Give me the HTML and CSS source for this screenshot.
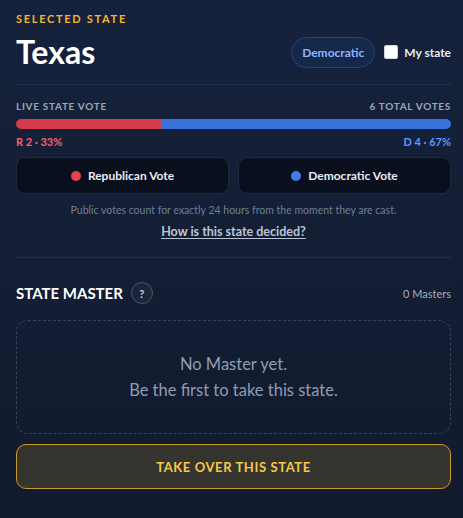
FILE: index.html
```html
<!DOCTYPE html>
<html lang="en">
<head>
  <meta charset="UTF-8">
  <meta name="viewport" content="width=device-width, initial-scale=1.0">
  <title>State Panel</title>
  <link rel="stylesheet" href="styles.css">
</head>
<body>
  <div class="panel">
    <div class="eyebrow">Selected State</div>
    <div class="state-head">
      <h1>Texas</h1>
      <div class="state-actions">
        <span class="party-pill">Democratic</span>
        <label class="my-state"><span class="box"></span> My state</label>
      </div>
    </div>

    <div class="vote-head">
      <span>Live State Vote</span>
      <span>6 Total Votes</span>
    </div>
    <div class="bar">
      <div class="bar-rep" style="width: 33.3%"></div>
      <div class="bar-dem"></div>
    </div>
    <div class="vote-counts">
      <span class="rep">R 2 · 33%</span>
      <span class="dem">D 4 · 67%</span>
    </div>

    <div class="vote-buttons">
      <button class="vote-btn"><span class="dot red"></span>Republican Vote</button>
      <button class="vote-btn"><span class="dot blue"></span>Democratic Vote</button>
    </div>
    <p class="note">Public votes count for exactly 24 hours from the moment they are cast.</p>
    <a class="how" href="#">How is this state decided?</a>

    <div class="master-head">
      <div class="master-title">State Master <span class="help">?</span></div>
      <span class="master-count">0 Masters</span>
    </div>
    <div class="empty-master">
      No Master yet.<br>
      Be the first to take this state.
    </div>
    <button class="take-over">Take Over This State</button>
  </div>
</body>
</html>
```

FILE: styles.css
```css
html, body {
  height: 100%;
}

body {
  margin: 0;
  font-family: Lato, "Open Sans", sans-serif;
  background: linear-gradient(180deg, #16223c 0%, #131d33 60%, #111a2d 100%);
  color: #e6ebf2;
}

.panel {
  padding: 11px 12px 0 16px;
}

.eyebrow {
  color: #f2b632;
  font-size: 11px;
  font-weight: 700;
  letter-spacing: 1.7px;
  text-transform: uppercase;
  line-height: 16px;
}

.state-head {
  display: flex;
  justify-content: space-between;
  align-items: center;
  padding: 7px 0 14px;
  border-bottom: 1px solid #1f3455;
}

h1 {
  margin: 0;
  font-size: 32px;
  font-weight: 700;
  color: #fff;
  line-height: 36px;
}

.state-actions {
  display: flex;
  align-items: center;
  gap: 9px;
}

.party-pill {
  padding: 6px 10px;
  border: 1px solid #24457a;
  border-radius: 16px;
  background: #14284a;
  color: #8fb3ff;
  font-size: 12px;
  font-weight: 700;
  line-height: 17px;
}

.my-state {
  display: flex;
  align-items: center;
  gap: 6px;
  font-size: 12px;
  font-weight: 700;
  color: #e6ebf2;
}

.my-state .box {
  width: 12px;
  height: 12px;
  background: #fff;
  border-radius: 2px;
  border: 1px solid #cfd6df;
}

.vote-head {
  display: flex;
  justify-content: space-between;
  margin-top: 14px;
  font-size: 10px;
  font-weight: 700;
  letter-spacing: 0.7px;
  text-transform: uppercase;
  color: #9aa6b6;
  line-height: 14px;
}

.bar {
  display: flex;
  height: 10px;
  margin-top: 6px;
  border-radius: 5px;
  overflow: hidden;
}

.bar-rep {
  background: #d63a4b;
}

.bar-dem {
  flex: 1;
  background: #3672dc;
}

.vote-counts {
  display: flex;
  justify-content: space-between;
  margin-top: 6px;
  font-size: 11px;
  font-weight: 700;
  line-height: 14px;
}

.rep { color: #ff5d6e; }
.dem { color: #5a9cff; }

.vote-buttons {
  display: grid;
  grid-template-columns: 1fr 1fr;
  gap: 9px;
  margin-top: 8px;
}

.vote-btn {
  display: flex;
  justify-content: center;
  align-items: center;
  gap: 7px;
  height: 37px;
  background: #0a0f1d;
  border: 1px solid #1f2a3d;
  border-radius: 9px;
  color: #e8ecf2;
  font-family: inherit;
  font-size: 12px;
  font-weight: 700;
}

.dot {
  width: 10px;
  height: 10px;
  border-radius: 50%;
}

.dot.red { background: #e8414f; }
.dot.blue { background: #3f7fe6; }

.note {
  margin: 9px 0 0;
  text-align: center;
  font-size: 10.5px;
  color: #6f7e95;
  line-height: 14px;
}

.how {
  display: block;
  width: max-content;
  margin: 6px auto 0;
  padding-bottom: 17px;
  color: #b9c5d6;
  font-size: 12.5px;
  font-weight: 700;
  line-height: 17px;
  text-decoration: underline;
  text-underline-offset: 2px;
}

.master-head {
  display: flex;
  justify-content: space-between;
  align-items: center;
  border-top: 1px solid #22304a;
  padding-top: 24px;
}

.master-title {
  display: flex;
  align-items: center;
  gap: 8px;
  font-size: 15px;
  font-weight: 700;
  color: #fff;
  text-transform: uppercase;
}

.help {
  display: flex;
  justify-content: center;
  align-items: center;
  width: 20px;
  height: 20px;
  border: 1px solid #4a5568;
  border-radius: 50%;
  background: #1c263a;
  font-size: 11px;
  color: #c9d2de;
}

.master-count {
  font-size: 11px;
  color: #a3aebf;
}

.empty-master {
  margin-top: 16px;
  height: 112px;
  display: flex;
  flex-direction: column;
  justify-content: center;
  align-items: center;
  text-align: center;
  border: 1px dashed #384358;
  border-radius: 12px;
  color: #8e9db2;
  font-size: 16.5px;
  line-height: 26px;
}

.take-over {
  display: block;
  width: 100%;
  height: 45px;
  margin-top: 10px;
  background: #36342f;
  border: 1px solid #c79c28;
  border-radius: 10px;
  color: #f7c844;
  font-family: inherit;
  font-size: 13px;
  font-weight: 700;
  letter-spacing: 0.6px;
  text-transform: uppercase;
}
```
